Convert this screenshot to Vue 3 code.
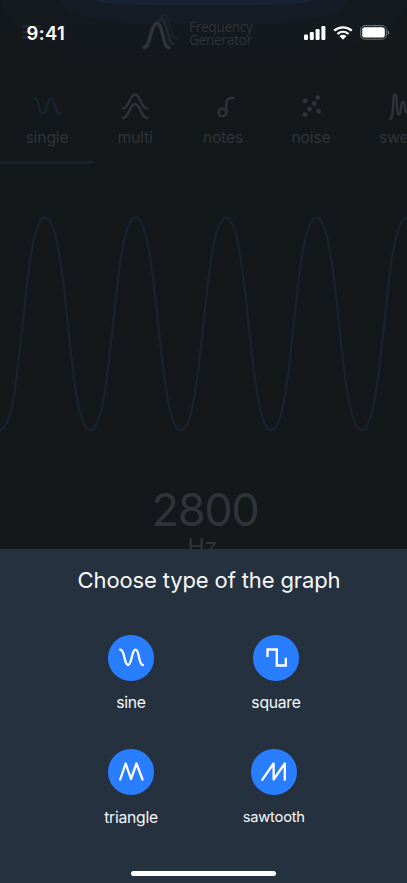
<script setup>
const tabs = ['single', 'multi', 'notes', 'noise', 'sweep']

const dots = [[8, 9], [20.7, 5.7], [17.3, 11.5], [12.5, 17], [8, 22.7], [21.7, 19.3]]

const crest = 17.7
const trough = 230.2
const half = 45.2
const bend = half * 0.51
let wave = `M0 ${trough}`
for (let i = 0; i < 10; i++) {
  const from = i % 2 ? crest : trough
  const to = i % 2 ? trough : crest
  const x = i * half
  wave += ` C${x + bend} ${from} ${x + half - bend} ${to} ${x + half} ${to}`
}

const shapes = [
  { name: 'sine', d: 'M1.200 1.700C6.200 1.700 4.800 17 9 17S12.300 1.700 16.500 1.700S19.200 17 24 17' },
  { name: 'square', d: 'M3.500 9V1.500H12.800V17.500H21.800V9.700' },
  { name: 'triangle', d: 'M1.200 17.500L6.700 1.500L12 17L17.500 1.500L23.500 17.500' },
  { name: 'sawtooth', d: 'M1.200 17.800L12.600 1.500V17.500L23.800 1.500V17.800' }
]
</script>

<template>
  <main class="screen">
    <div class="glow"><i class="ring outer"></i><i class="ring middle"></i><i class="ring inner"></i></div>

    <header class="header">
      <svg class="menu" width="19" height="14" viewBox="0 0 19 14"><path d="M0 1.500H19M0 7H19M0 12.500H19" /></svg>
      <div class="brand">
        <svg width="36" height="38" viewBox="0 0 36 38">
          <path class="echo far" d="M17 7C22 -3 26 3 28 14C30 22 31 26 34.500 25.500" />
          <path class="echo" d="M15 10C19 2 23 7 25 17C27 25 28 31 31 31" />
          <path class="main-wave" d="M2 34.500C8.500 34.500 8.500 10.500 15 10.500S20 34.500 27 34.500" />
        </svg>
        <p class="brand-name">Frequency<br>Generator</p>
      </div>
      <svg class="gear" width="18" height="18" viewBox="0 0 18 18"><circle cx="9" cy="9" r="5" /><path d="M9 1V17M1 9H17M3.300 3.300L14.700 14.700M14.700 3.300L3.300 14.700" /></svg>
    </header>

    <nav class="tabs">
      <div v-for="(tab, i) in tabs" :key="tab" class="tab" :class="[tab, { active: i === 0 }]">
        <svg width="28" height="28" viewBox="0 0 28 28">
          <path v-if="i === 0" d="M1.500 6.500C6.500 6.500 5.500 21.500 9.700 21.500S14 6.500 18 6.500S22 21.500 27 21.500" />
          <path v-else-if="i === 1" d="M2 16.500C8 16.500 8.500 2.500 14 2.500S20 16.500 26 16.500M2 26C8 26 8.500 12 14 12S20 26 26 26" />
          <g v-else-if="i === 2"><circle cx="13.400" cy="20.500" r="3.900" /><path d="M17.300 20.500V11C17.300 7 19.500 6 24.500 6" /></g>
          <g v-else-if="i === 3" class="dots"><circle v-for="(p, n) in dots" :key="n" :cx="p[0]" :cy="p[1]" r="2.400" /></g>
          <path v-else d="M1.500 27C5.500 25 3 2.500 6 2.500S7 22.500 10 22.500S11 10 14 10S15 21 18 20S20 13 26 13" />
        </svg>
        <span>{{ tab }}</span>
      </div>
    </nav>
    <div class="indicator"></div>

    <svg class="wave" width="407" height="250" viewBox="0 0 407 250"><path :d="wave" /></svg>

    <section class="reading">
      <strong>2800</strong>
      <span>Hz</span>
    </section>

    <section class="sheet">
      <h1>Choose type of the graph</h1>
      <div class="choices">
        <button v-for="shape in shapes" :key="shape.name" class="choice" :class="shape.name">
          <span class="disc">
            <svg width="25" height="19" viewBox="0 0 25 19"><path :d="shape.d" /></svg>
          </span>
          <span class="label">{{ shape.name }}</span>
        </button>
      </div>
      <div class="home"></div>
    </section>

    <div class="status">
      <span class="time">9:41</span>
      <div class="signals">
        <svg width="22" height="14" viewBox="0 0 22 14"><rect x="0" y="8.500" width="4" height="5.500" rx="1.200" /><rect x="5.800" y="6" width="4" height="8" rx="1.200" /><rect x="11.600" y="3" width="4" height="11" rx="1.200" /><rect x="17.400" y="0" width="4" height="14" rx="1.200" /></svg>
        <svg class="wifi" width="20" height="14" viewBox="0 0 20 14"><path class="arc" d="M1.200 4.700C6.200 .2 13.800 .2 18.800 4.700M4.400 8C7.700 5.100 12.300 5.100 15.600 8" /><path d="M6.500 10.100Q10 7.300 13.500 10.100L10 13.700Z" /></svg>
        <svg width="30" height="15" viewBox="0 0 30 15"><rect class="shell" x=".6" y=".6" width="25.800" height="13.600" rx="4.200" /><rect x="2.200" y="2.200" width="22.600" height="10.400" rx="2.700" /><path class="cap" d="M27.600 5Q29.300 6 29.300 7.500T27.600 10Z" /></svg>
      </div>
    </div>
  </main>
</template>

<style>
body { background: #14181b; }
</style>

<style scoped>
.screen {
  position: relative;
  display: flex;
  flex-direction: column;
  width: 407px;
  height: 883px;
  overflow: hidden;
  background: #14181b;
  color: #303337;
  font-family: Inter, sans-serif;
}
svg { display: block; flex: none; fill: none; stroke-linecap: round; stroke-linejoin: round; }
.glow { position: absolute; inset: 0 0 auto; height: 80px; overflow: hidden; }
.ring { position: absolute; top: 0; left: 50%; transform: translateX(-50%); }
.outer { width: 407px; height: 68px; border-radius: 0 0 50% 50% / 0 0 100% 100%; background: linear-gradient(#151a1f, #14181b); }
.middle { width: 290px; height: 23px; border-radius: 0 0 90px 90px / 0 0 23px 23px; background: #161c26; }
.inner { width: 216px; height: 5px; border-radius: 0 0 50px 50px / 0 0 5px 5px; background: #172235; }
.header { position: relative; display: flex; align-items: center; height: 64px; box-sizing: border-box; padding: 0 23px 0 22px; }
.menu, .gear { stroke: #272b2e; stroke-width: 2; }
.brand { display: flex; align-items: center; gap: 11px; margin-left: 101px; }
.brand svg { stroke: #303337; stroke-width: 3.5; }
.brand .echo { stroke: #23272b; stroke-width: 3; }
.brand .far { stroke: #1c2127; }
.brand-name { margin: 2px 0 0; font: 13.6px/13.5px "Open Sans", sans-serif; letter-spacing: -.28px; }
.gear { margin-left: auto; stroke-width: 1.5; }
.tabs { position: relative; display: flex; padding: 28px 0 0 3px; height: 69px; }
.tab { display: flex; flex: 0 0 88px; flex-direction: column; align-items: center; gap: 7px; font-size: 15.700px; line-height: 22px; letter-spacing: -.15px; }
.tab svg { stroke: currentColor; stroke-width: 2.4; }
.tab .dots { fill: currentColor; stroke: none; }
.tab.active svg { color: #182334; }
.tab.sweep { flex-basis: 96px; }
.indicator { width: 93px; height: 2.500px; background: #1a2230; }
.wave { margin-top: 36.500px; stroke: #182231; stroke-width: 2.400; }
.reading { display: flex; flex-direction: column; align-items: center; margin-top: 33px; padding-left: 3px; height: 66px; overflow: hidden; }
.reading strong { font-size: 45px; line-height: 54px; font-weight: 400; letter-spacing: -1.300px; }
.reading span { font-size: 23px; line-height: 20px; margin-right: 5px; }
.sheet { display: flex; flex: none; flex-direction: column; height: 334px; background: #26313f; color: #f7f9fb; }
h1 { margin: 17px 0 0 11px; font-size: 22px; line-height: 28px; font-weight: 400; text-align: center; letter-spacing: -.130px; }
.choices { display: grid; grid-template-columns: 145px 145px; grid-template-rows: 114px 114px; margin: 41px 0 0 58.500px; }
.choice { display: flex; flex-direction: column; align-items: center; gap: 11px; padding: 0; border: 0; background: none; color: inherit; font: 15.700px/22px Inter, sans-serif; letter-spacing: -.25px; }
.triangle { gap: 12px; }
.disc { display: flex; align-items: center; justify-content: center; width: 45.500px; height: 45.500px; border-radius: 50%; background: #297eff; }
.disc svg { stroke: #fff; stroke-width: 2.300; }
.square .disc path { stroke-linecap: butt; stroke-linejoin: miter; }
.sawtooth { margin-left: -4.500px; font-size: 14.700px; letter-spacing: -.200px; }
.home { width: 145px; height: 5px; margin: 7.500px auto 0 131px; border-radius: 3px; background: #fff; }
.status { position: absolute; inset: 0 0 auto; display: flex; align-items: center; justify-content: space-between; height: 65px; padding: 0 17px 0 26.500px; color: #fff; }
.time { font-size: 18.400px; line-height: 22px; font-weight: 600; letter-spacing: .4px; }
.signals { display: flex; align-items: center; gap: 7px; }
.signals svg { fill: #fff; }
.signals .arc { fill: none; stroke: #fff; stroke-width: 2.3; stroke-linecap: butt; }
.signals .shell { fill: none; stroke: #6f7274; stroke-width: 1; }
.signals .cap { fill: #6f7274; }
</style>
